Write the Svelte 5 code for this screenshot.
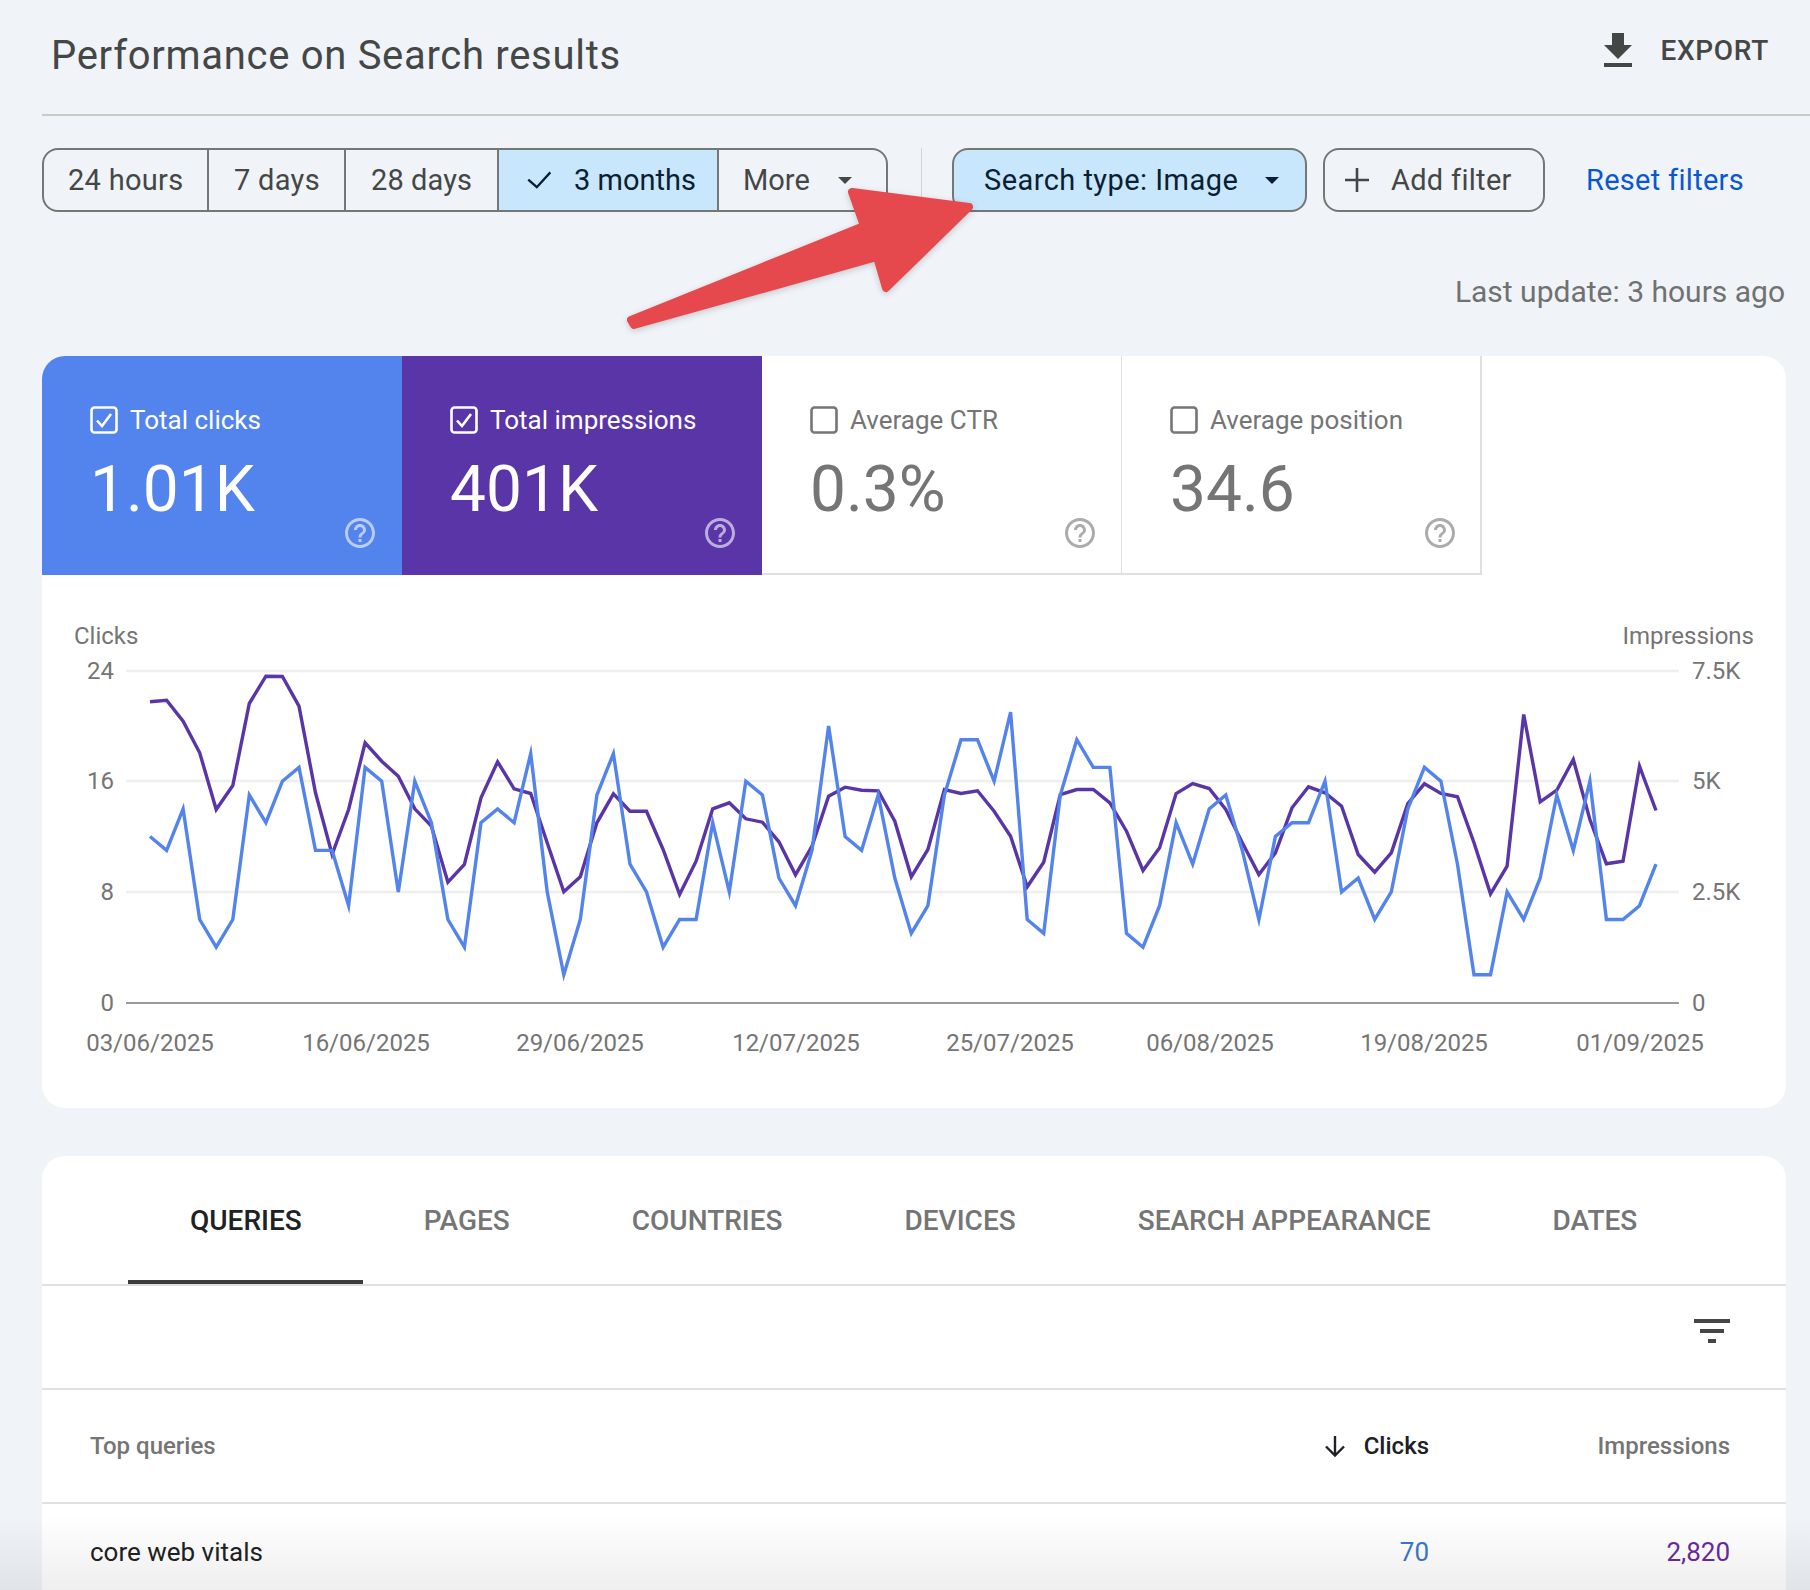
<script>
  const blueV = [12,11,14,6,4,6,15,13,16,17,11,11,7,17,16,8,16,13,6,4,13,14,13,18,8,2,6,15,18,10,8,4,6,6,13,8,16,15,9,7,11,20,12,11,15,9,5,7,15,19,19,16,21,6,5,15,19,17,17,5,4,7,13,10,14,15,11,6,12,13,13,16,8,9,6,8,14,17,16,10,2,2,8,6,9,15,11,16,6,6,7,10];
  const purpleZ = [67,62,125,220,390,318,72,-10,-9,80,340,525,390,190,245,290,388,440,608,555,355,247,328,342,490,637,592,430,343,395,395,510,645,545,388,370,418,428,487,586,500,350,323,332,334,425,592,510,330,342,334,395,470,622,548,345,330,330,370,455,573,505,342,312,327,390,490,585,520,385,322,340,380,525,578,520,372,313,342,352,490,643,560,105,367,332,240,420,553,545,260,393];
  const xAt = (i) => (150 + i * 16.55).toFixed(1);
  const bluePts = blueV.map((v, i) => `${xAt(i)},${(1002.5 - v * 13.83).toFixed(1)}`).join(' ');
  const purplePts = purpleZ.map((z, i) => `${xAt(i)},${(679.5 + z / 3).toFixed(1)}`).join(' ');
  const grid = [{y:671,l:'24',r:'7.5K'},{y:781,l:'16',r:'5K'},{y:892,l:'8',r:'2.5K'}];
  const dates = [[150,'03/06/2025'],[366,'16/06/2025'],[580,'29/06/2025'],[796,'12/07/2025'],[1010,'25/07/2025'],[1210,'06/08/2025'],[1424,'19/08/2025'],[1640,'01/09/2025']];
  const tiles = [
    {k:'blue',label:'Total clicks',value:'1.01K',on:true},
    {k:'purple',label:'Total impressions',value:'401K',on:true},
    {k:'plain mid',label:'Average CTR',value:'0.3%',on:false},
    {k:'plain last',label:'Average position',value:'34.6',on:false},
  ];
  const tabs = ['QUERIES','PAGES','COUNTRIES','DEVICES','SEARCH APPEARANCE','DATES'];
</script>

<div class="page">
  <header class="head">
    <h1>Performance on Search results</h1>
    <div class="export">
      <svg class="dl" viewBox="5 3 14 17" aria-hidden="true"><path d="M19 9h-4V3H9v6H5l7 7 7-7zM5 18v2h14v-2H5z"/></svg>
      <span>EXPORT</span>
    </div>
  </header>

  <div class="toolbar">
    <div class="group">
      <div class="seg s1">24 hours</div>
      <div class="seg s2">7 days</div>
      <div class="seg s3">28 days</div>
      <div class="seg s4 on">
        <svg class="tick" viewBox="0 0 28 20" aria-hidden="true"><path d="M1.5 9.5 L11 18 L26 1.5"/></svg>
        <span>3 months</span>
      </div>
      <div class="seg s5"><span>More</span><i class="caret"></i></div>
    </div>
    <div class="sep"></div>
    <div class="pill type"><span>Search type: Image</span><i class="caret dark"></i></div>
    <div class="pill add">
      <svg class="plus" viewBox="0 0 24 24" aria-hidden="true"><path d="M12 0V24M0 12H24"/></svg>
      <span>Add filter</span>
    </div>
    <div class="reset">Reset filters</div>
  </div>

  <div class="updated">Last update: 3 hours ago</div>

  <section class="card chartcard">
    <div class="tiles">
      {#each tiles as t}
        <div class="tile {t.k}">
          <div class="lab">
            <svg class="cb" viewBox="0 0 28 28" aria-hidden="true">
              <rect x="1.5" y="1.5" width="25" height="25" rx="3"/>
              {#if t.on}<path d="M7 14.5 L12 20 L21 8"/>{/if}
            </svg>
            <span>{t.label}</span>
          </div>
          <div class="val">{t.value}</div>
          <svg class="help" viewBox="2 2 20 20" aria-hidden="true"><path d="M11 18h2v-2h-2v2zm1-16C6.48 2 2 6.48 2 12s4.48 10 10 10 10-4.48 10-10S17.52 2 12 2zm0 18c-4.41 0-8-3.59-8-8s3.59-8 8-8 8 3.59 8 8-3.59 8-8 8zm0-14c-2.21 0-4 1.79-4 4h2c0-1.1.9-2 2-2s2 .9 2 2c0 2-3 1.75-3 5h2c0-2.25 3-2.5 3-5 0-2.21-1.79-4-4-4z"/></svg>
        </div>
      {/each}
    </div>
    <svg class="chart" viewBox="42 575 1743 533" aria-hidden="true">
      <text class="axis" x="74" y="644">Clicks</text>
      <text class="axis end" x="1754" y="644">Impressions</text>
      {#each grid as g}
        <line class="gl" x1="126" x2="1679" y1={g.y} y2={g.y}/>
        <text class="axis end" x="114" y={g.y + 8}>{g.l}</text>
        <text class="axis" x="1692" y={g.y + 8}>{g.r}</text>
      {/each}
      <line class="base" x1="126" x2="1679" y1="1003" y2="1003"/>
      <text class="axis end" x="114" y="1011">0</text>
      <text class="axis" x="1692" y="1011">0</text>
      {#each dates as d}
        <text class="axis mid" x={d[0]} y="1051">{d[1]}</text>
      {/each}
      <polyline class="line p" points={purplePts}/>
      <polyline class="line b" points={bluePts}/>
    </svg>
  </section>

  <section class="card tablecard">
    <nav class="tabs">
      {#each tabs as t, i}
        <div class="tab" class:active={i === 0}>{t}</div>
      {/each}
    </nav>
    <div class="filterrow">
      <svg class="filt" viewBox="0 0 36 24" aria-hidden="true"><path d="M0 0H36V4H0zM6 10H30V14H6zM14 20H22V24H14z"/></svg>
    </div>
    <div class="row headrow">
      <div class="q">Top queries</div>
      <div class="c sorted">
        <svg class="down" viewBox="0 0 22 22" aria-hidden="true"><path d="M11 1V20M2 11.5L11 20.5L20 11.5"/></svg>
        <span>Clicks</span>
      </div>
      <div class="c">Impressions</div>
    </div>
    <div class="row datarow">
      <div class="q">core web vitals</div>
      <div class="c clicks">70</div>
      <div class="c imps">2,820</div>
    </div>
  </section>

  <div class="fade"></div>

  <svg class="arrow" viewBox="0 0 1810 1590" aria-hidden="true">
    <polygon points="852,192 969,207 886,288 877,257 634,325 631,320 864,226"/>
  </svg>
</div>

<style>
  :global(body) { margin: 0; background: #f0f4f9; }
  .page {
    position: relative;
    width: 1810px;
    height: 1590px;
    overflow: hidden;
    background: #f0f4f9;
    font-family: Roboto, "Liberation Sans", sans-serif;
    color: #444746;
  }
  .head {
    margin-left: 42px;
    height: 114px;
    padding: 0 41px 0 9px;
    box-sizing: content-box;
    border-bottom: 2px solid #c9cbc9;
    display: flex;
    align-items: flex-start;
    justify-content: space-between;
  }
  h1 {
    margin: 34px 0 0;
    font-size: 40px;
    line-height: 44px;
    font-weight: 400;
    color: #444746;
    letter-spacing: 0.7px;
  }
  .export {
    display: flex;
    align-items: center;
    gap: 28px;
    margin-top: 32px;
    font-size: 28px;
    font-weight: 500;
    letter-spacing: 0.7px;
  }
  .export span { margin-top: 2px; }
  .dl { width: 28px; height: 34px; fill: #444746; }

  .toolbar {
    display: flex;
    align-items: stretch;
    height: 64px;
    margin: 32px 0 0 42px;
    font-size: 29px;
    letter-spacing: 0.3px;
  }
  .group {
    display: flex;
    width: 846px;
    box-sizing: border-box;
    border: 2px solid #747775;
    border-radius: 16px;
    overflow: hidden;
  }
  .seg {
    display: flex;
    align-items: center;
    box-sizing: border-box;
    border-right: 2px solid #747775;
    padding-left: 24px;
    white-space: nowrap;
  }
  .s1 { width: 165px; }
  .s2 { width: 137px; padding-left: 25px; }
  .s3 { width: 153px; padding-left: 25px; letter-spacing: 0.1px; }
  .s4 { width: 220px; padding-left: 27px; gap: 21px; letter-spacing: 0; }
  .s5 { flex: 1; border-right: 0; gap: 28px; letter-spacing: 0; }
  .on { background: #c8e6fc; color: #0a1f33; }
  .tick { width: 27px; height: 18px; fill: none; stroke: #0a1f33; stroke-width: 2.6; }
  .caret {
    display: block;
    width: 0;
    height: 0;
    border-left: 7.5px solid transparent;
    border-right: 7.5px solid transparent;
    border-top: 7.5px solid #444746;
  }
  .caret.dark { border-top-color: #0a1f33; }
  .sep { width: 1px; margin-left: 33px; background: #d3d5d4; }
  .pill {
    display: flex;
    align-items: center;
    box-sizing: border-box;
    border: 2px solid #747775;
    border-radius: 16px;
    white-space: nowrap;
  }
  .type {
    width: 355px;
    margin-left: 30px;
    padding-left: 30px;
    gap: 27px;
    background: #c8e6fc;
    color: #0a1f33;
    letter-spacing: 0.45px;
  }
  .add {
    width: 222px;
    margin-left: 16px;
    padding-left: 20px;
    gap: 22px;
  }
  .plus { width: 24px; height: 24px; fill: none; stroke: #444746; stroke-width: 2.6; }
  .reset {
    display: flex;
    align-items: center;
    margin-left: 41px;
    color: #0b57d0;
    white-space: nowrap;
  }

  .updated {
    padding: 62px 25px 46px 0;
    text-align: right;
    font-size: 30px;
    line-height: 36px;
    color: #6f7270;
  }

  .card {
    margin: 0 24px 0 42px;
    background: #fff;
    border-radius: 23px 23px 0 0;
    overflow: hidden;
  }
  .chartcard { border-radius: 23px; }
  .tiles { display: flex; height: 219px; }
  .tile {
    display: flex;
    flex-direction: column;
    box-sizing: border-box;
    width: 360px;
    padding: 50px 27px 27px 48px;
    color: #fff;
  }
  .tile.blue { background: #5383ec; }
  .tile.purple { background: #5935a8; }
  .tile.plain {
    color: #757575;
    border-bottom: 2px solid #e0e0e0;
    border-right: 2px solid #e0e0e0;
    padding-bottom: 25px;
  }
  .tile.mid { border-right-width: 1px; padding-right: 26px; }
  .tile.last { padding-right: 25px; }
  .lab {
    display: flex;
    align-items: center;
    gap: 12px;
    height: 28px;
    font-size: 26px;
    white-space: nowrap;
  }
  .cb { width: 28px; height: 28px; fill: none; stroke: currentColor; stroke-width: 2.6; flex: none; }
  .val {
    margin-top: 33px;
    font-size: 64px;
    line-height: 46px;
    font-weight: 400;
  }
  .help { width: 30px; height: 30px; margin-top: auto; align-self: flex-end; fill: currentColor; opacity: 0.6; }

  .chart { display: block; width: 1743px; height: 533px; }
  .axis { font-size: 24px; fill: #757575; font-family: Roboto, "Liberation Sans", sans-serif; }
  .end { text-anchor: end; }
  .mid { text-anchor: middle; }
  .gl { stroke: #eeeeee; stroke-width: 2.5; }
  .base { stroke: #9a9a9a; stroke-width: 2; }
  .line { fill: none; stroke-width: 3.4; stroke-linejoin: miter; stroke-miterlimit: 6; }
  .line.b { stroke: #5383ec; }
  .line.p { stroke: #5935a8; }

  .tablecard { margin-top: 48px; height: 434px; }
  .tabs {
    display: flex;
    height: 128px;
    padding-left: 86px;
    border-bottom: 2px solid #e0e0e0;
    box-sizing: content-box;
  }
  .tab {
    display: flex;
    align-items: center;
    box-sizing: border-box;
    height: 128px;
    padding: 4px 61px 0;
    font-size: 28px;
    font-weight: 500;
    color: #757575;
    white-space: nowrap;
    border-bottom: 4px solid transparent;
  }
  .tab:first-child { padding: 4px 61px 0 62px; }
  .tab.active { color: #202124; border-bottom-color: #3c3c3c; }
  .filterrow {
    display: flex;
    justify-content: flex-end;
    box-sizing: border-box;
    height: 104px;
    padding: 33px 56px 0 0;
    border-bottom: 2px solid #e0e0e0;
  }
  .filt { width: 36px; height: 24px; fill: #444746; }
  .row {
    display: grid;
    grid-template-columns: 1fr 250px 301px;
    align-items: center;
    padding: 0 56px 0 48px;
  }
  .headrow {
    height: 114px;
    box-sizing: border-box;
    border-bottom: 2px solid #e0e0e0;
    font-size: 24px;
    font-weight: 500;
    color: #757575;
  }
  .datarow { height: 96px; font-size: 26px; color: #202124; }
  .c { text-align: right; }
  .sorted {
    display: flex;
    justify-content: flex-end;
    align-items: center;
    gap: 18px;
    color: #202124;
  }
  .down { width: 22px; height: 22px; fill: none; stroke: #202124; stroke-width: 2.4; }
  .clicks { color: #3b78c9; }
  .imps { color: #6a2a9e; }

  .fade {
    position: absolute;
    left: 0;
    right: 0;
    bottom: 0;
    height: 75px;
    background: linear-gradient(to bottom, rgba(0,0,0,0), rgba(0,0,0,0.065));
    pointer-events: none;
  }
  .arrow {
    position: absolute;
    left: 0;
    top: 0;
    width: 1810px;
    height: 1590px;
    pointer-events: none;
    filter: drop-shadow(0 2px 3px rgba(0,0,0,0.18));
  }
  .arrow polygon { fill: #e5484d; stroke: #e5484d; stroke-width: 8; stroke-linejoin: round; }
</style>
